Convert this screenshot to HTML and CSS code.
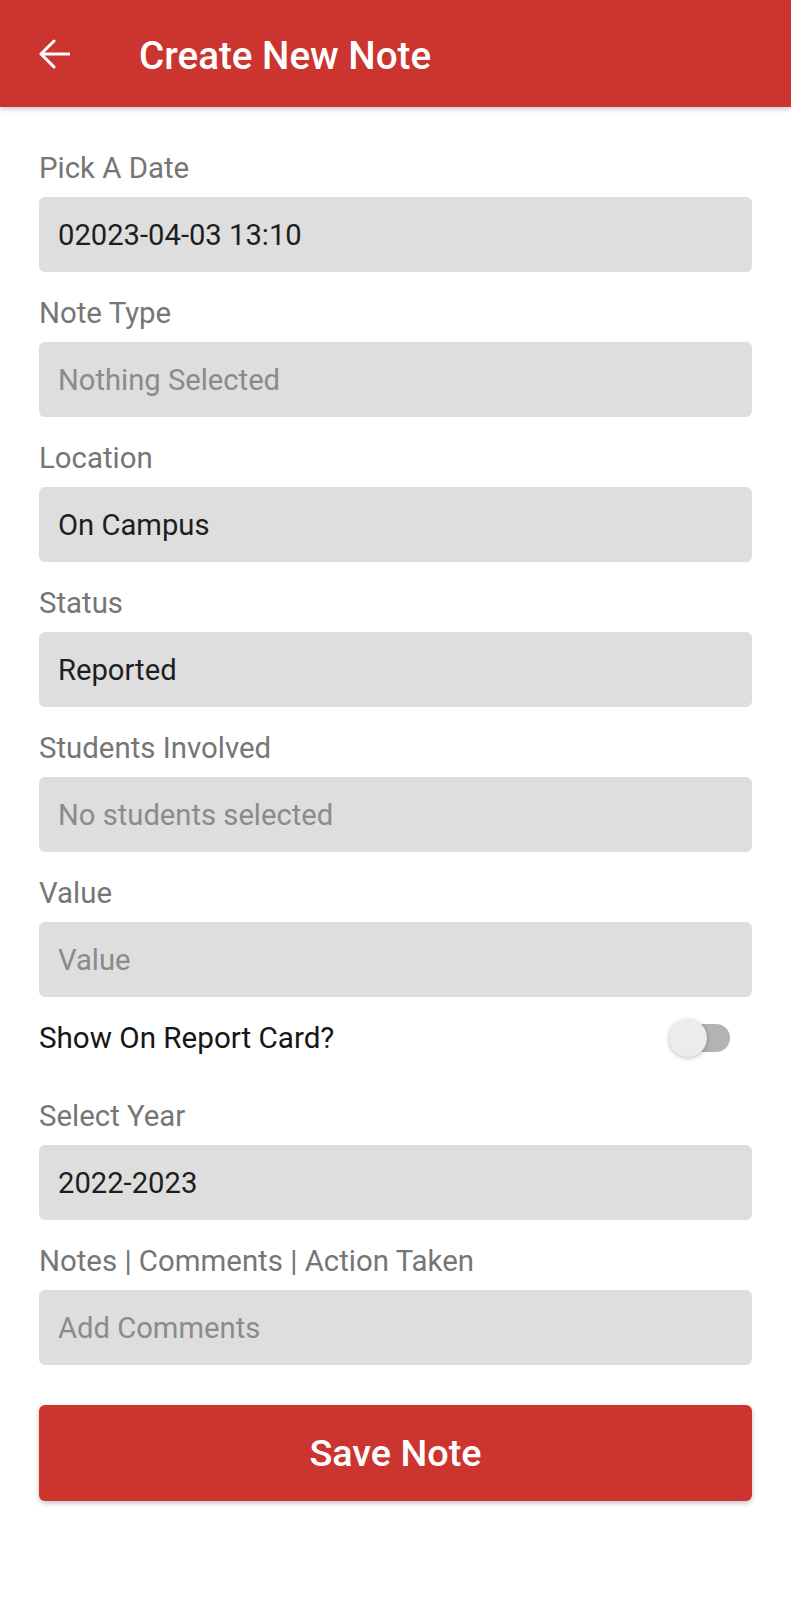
FILE: index.html
```html
<!DOCTYPE html>
<html lang="en">
<head>
<meta charset="utf-8">
<title>Create New Note</title>
<link rel="stylesheet" href="styles.css">
</head>
<body>
<header class="appbar">
  <svg class="back" viewBox="0 0 32 30" width="32" height="30" aria-hidden="true">
    <path d="M31 15H3M16 2L3 15l13 13" fill="none" stroke="#fff" stroke-width="3" stroke-linecap="round" stroke-linejoin="round"/>
  </svg>
  <h1 class="title">Create New Note</h1>
</header>
<main class="content">
  <div class="field">
    <div class="label">Pick A Date</div>
    <div class="box value">02023-04-03 13:10</div>
  </div>
  <div class="field">
    <div class="label">Note Type</div>
    <div class="box placeholder">Nothing Selected</div>
  </div>
  <div class="field">
    <div class="label">Location</div>
    <div class="box value">On Campus</div>
  </div>
  <div class="field">
    <div class="label">Status</div>
    <div class="box value">Reported</div>
  </div>
  <div class="field">
    <div class="label">Students Involved</div>
    <div class="box placeholder">No students selected</div>
  </div>
  <div class="field">
    <div class="label">Value</div>
    <div class="box placeholder">Value</div>
  </div>
  <div class="switch-row">
    <span class="switch-label">Show On Report Card?</span>
    <span class="switch">
      <span class="track"></span>
      <span class="thumb"></span>
    </span>
  </div>
  <div class="field">
    <div class="label">Select Year</div>
    <div class="box value">2022-2023</div>
  </div>
  <div class="field">
    <div class="label">Notes | Comments | Action Taken</div>
    <div class="box placeholder">Add Comments</div>
  </div>
  <button class="save">Save Note</button>
</main>
</body>
</html>
```
FILE: styles.css
```css
* { box-sizing: border-box; }
html, body {
  margin: 0;
  padding: 0;
  background: #ffffff;
  font-family: Roboto, "Noto Sans", "Liberation Sans", sans-serif;
}
.appbar {
  height: 107px;
  background: #cc3430;
  display: flex;
  align-items: center;
  padding-left: 38px;
  box-shadow: 0 2px 5px rgba(0, 0, 0, 0.22);
  position: relative;
  z-index: 1;
}
.back { display: block; flex: none; margin-top: 0; }
.title {
  margin: 6px 0 0 69px;
  color: #ffffff;
  font-size: 38.6px;
  font-weight: 500;
  line-height: 1;
}
.content {
  padding: 43px 39px 40px;
  display: flex;
  flex-direction: column;
}
.field {
  display: flex;
  flex-direction: column;
  gap: 11px;
  margin-bottom: 23px;
}
.label {
  height: 36px;
  line-height: 36px;
  font-size: 29.4px;
  color: #767676;
}
.box {
  height: 75px;
  background: #dedede;
  border-radius: 6px;
  display: flex;
  align-items: center;
  padding-left: 19px;
  font-size: 29.2px;
}
.value { color: #1e1e1e; }
.placeholder { color: #8b8b8b; }
.switch-row {
  height: 36px;
  display: flex;
  align-items: center;
  justify-content: space-between;
  margin-bottom: 42px;
}
.switch-label {
  font-size: 29.6px;
  color: #161616;
}
.switch {
  position: relative;
  width: 61px;
  height: 38px;
  margin-right: 22px;
}
.track {
  position: absolute;
  right: 0;
  top: 5px;
  width: 56px;
  height: 28px;
  border-radius: 14px;
  background: #b3b3b3;
}
.thumb {
  position: absolute;
  left: 0;
  top: 0;
  width: 38px;
  height: 38px;
  border-radius: 50%;
  background: #ececec;
  box-shadow: 0 1px 4px rgba(0, 0, 0, 0.28);
}
.save {
  margin-top: 17px;
  height: 96px;
  border: none;
  border-radius: 6px;
  background: #cc3430;
  color: #ffffff;
  font-family: inherit;
  font-size: 37.8px;
  font-weight: 500;
  box-shadow: 0 2px 5px rgba(0, 0, 0, 0.25);
}
```
